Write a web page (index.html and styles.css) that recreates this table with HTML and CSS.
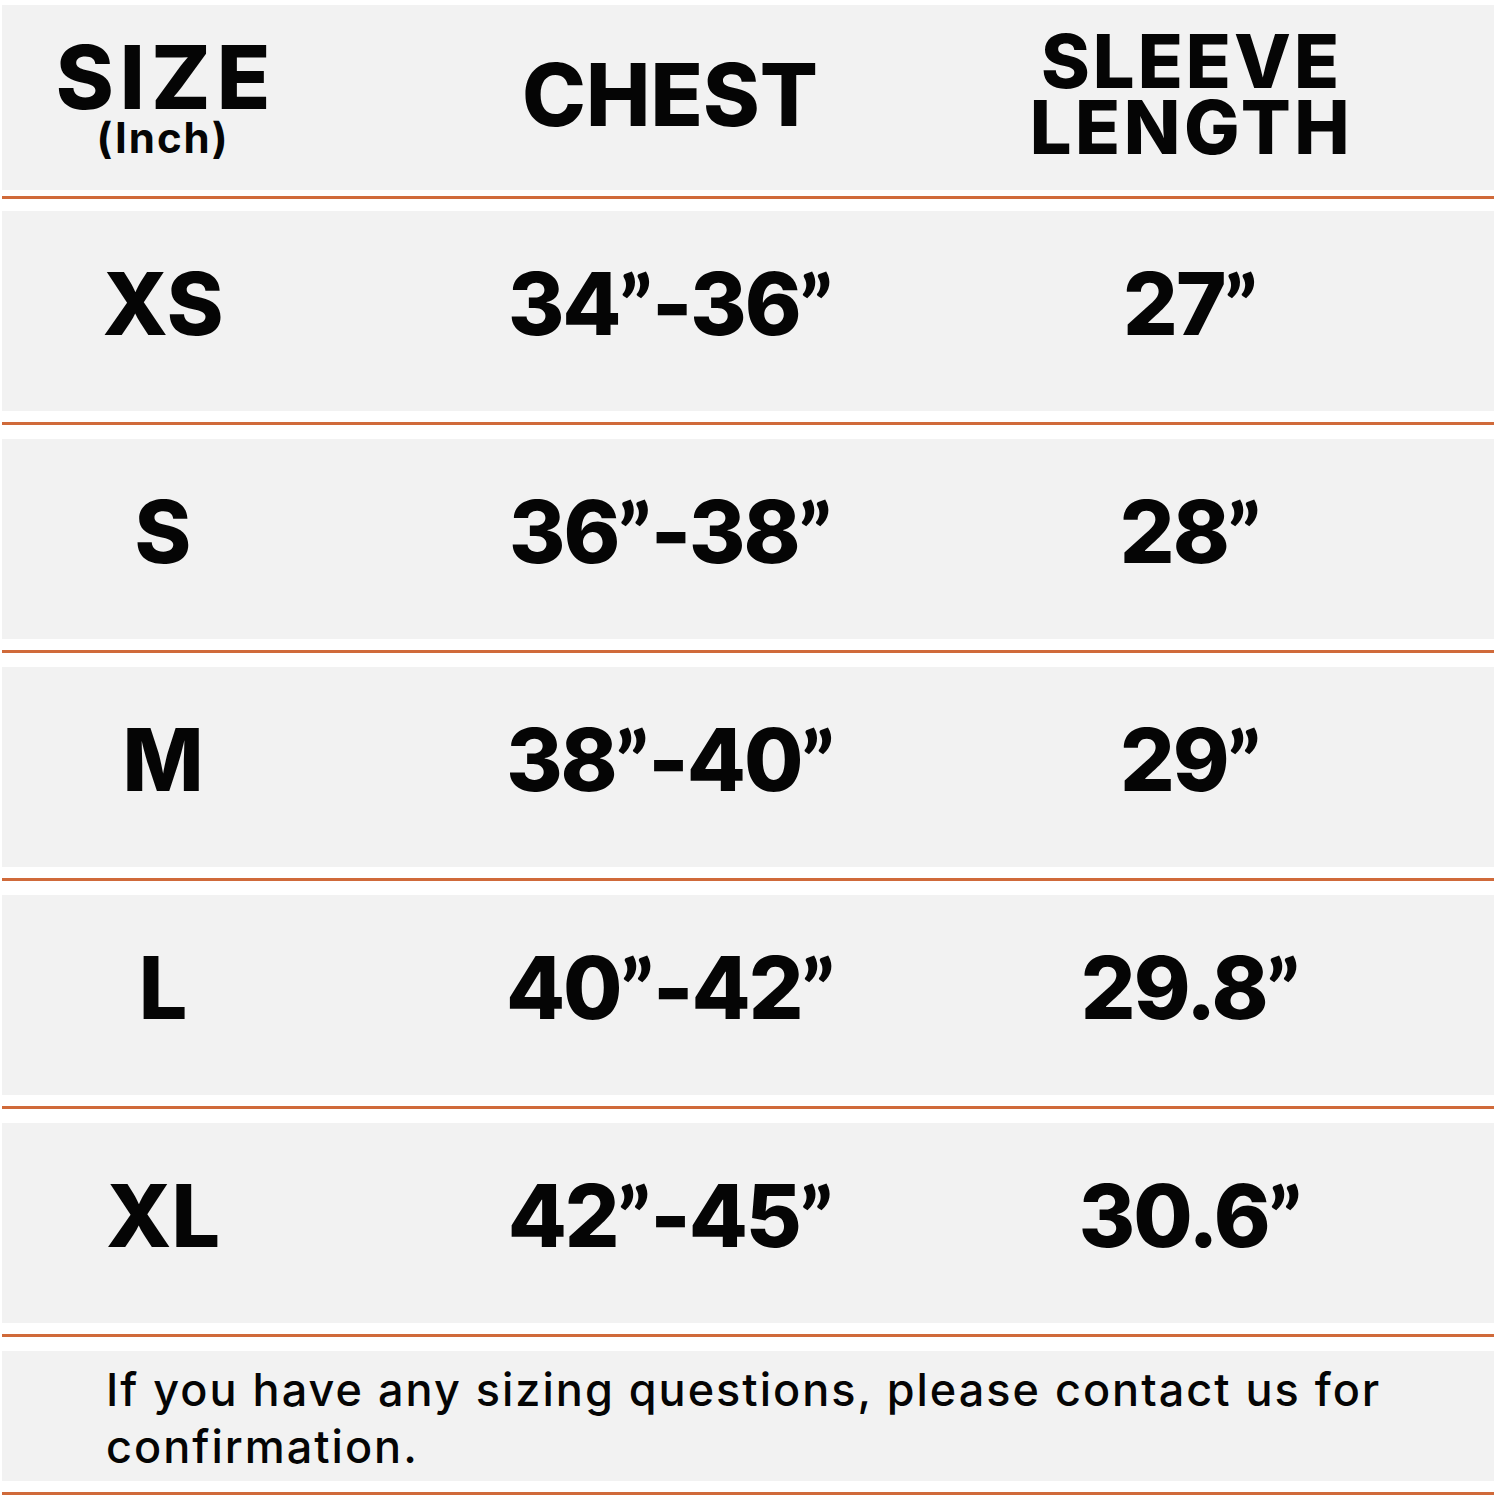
FILE: index.html
```html
<!DOCTYPE html>
<html lang="en">
<head>
<meta charset="utf-8">
<title>Size Chart</title>
<link rel="stylesheet" href="styles.css">
</head>
<body>
<main class="chart">
  <div class="row head">
    <div class="cell"><div class="size">SIZE</div><div class="unit">(Inch)</div></div>
    <div class="cell"><div class="h1">CHEST</div></div>
    <div class="cell"><div class="h2">SLEEVE</div><div class="h2">LENGTH</div></div>
  </div>
  <div class="sep first"></div>
  <div class="row"><div class="cell">XS</div><div class="cell num">34<span class="q">”</span>-36<span class="q">”</span></div><div class="cell num">27<span class="q">”</span></div></div>
  <div class="sep"></div>
  <div class="row"><div class="cell">S</div><div class="cell num">36<span class="q">”</span>-38<span class="q">”</span></div><div class="cell num">28<span class="q">”</span></div></div>
  <div class="sep"></div>
  <div class="row"><div class="cell">M</div><div class="cell num">38<span class="q">”</span>-40<span class="q">”</span></div><div class="cell num">29<span class="q">”</span></div></div>
  <div class="sep"></div>
  <div class="row"><div class="cell">L</div><div class="cell num">40<span class="q">”</span>-42<span class="q">”</span></div><div class="cell num">29.8<span class="q">”</span></div></div>
  <div class="sep"></div>
  <div class="row"><div class="cell">XL</div><div class="cell num">42<span class="q">”</span>-45<span class="q">”</span></div><div class="cell num">30.6<span class="q">”</span></div></div>
  <div class="sep"></div>
  <div class="note">If you have any sizing questions, please contact us for confirmation.</div>
  <div class="sep"></div>
</main>
</body>
</html>
```

FILE: styles.css
```css
html, body {
  margin: 0;
  padding: 0;
  background: #ffffff;
}

body {
  font-family: Inter, "Noto Sans", sans-serif;
  color: #050505;
}

.chart {
  width: 1492px;
  margin-left: 2px;
  padding-top: 5px;
}

.row {
  display: grid;
  grid-template-columns: 322px 692px 348px 1fr;
  height: 200px;
  background: #f2f2f2;
  align-items: center;
}

.row.head {
  height: 185px;
}

.cell {
  display: flex;
  flex-direction: column;
  align-items: center;
  justify-content: center;
  text-align: center;
  font-weight: 800;
  font-size: 86px;
  line-height: 1;
  padding-bottom: 14px;
}

.num {
  display: block;
  letter-spacing: -2px;
}

.q {
  font-family: Lato, "Noto Sans", sans-serif;
  font-weight: 900;
  font-size: 82px;
  letter-spacing: 0;
}

.head .cell {
  padding-bottom: 0;
}

.size {
  font-size: 88px;
  letter-spacing: 6px;
  margin-left: 6px;
  line-height: 0.9;
  margin-top: 2px;
}

.unit {
  font-size: 42px;
  font-weight: 700;
  letter-spacing: 2px;
  line-height: 1;
  margin-top: 0;
}

.h1 {
  font-size: 86px;
  line-height: 1;
  margin-bottom: 6px;
}

.h2 {
  font-size: 74px;
  line-height: 60px;
  letter-spacing: 3px;
  margin-left: 3px;
}

.h2 + .h2 {
  margin-top: 6px;
  letter-spacing: 3.5px;
}

.head .cell:last-child {
  margin-top: -8px;
}

.sep {
  height: 3px;
  background: #d06a3a;
  margin: 11px 0 14px;
}

.sep.first {
  margin-top: 6px;
  margin-bottom: 12px;
}

.note {
  background: #f2f2f2;
  height: 130px;
  box-sizing: border-box;
  padding: 10px 40px 0 104px;
  font-size: 45px;
  font-weight: 500;
  letter-spacing: 2px;
  line-height: 57px;
}
```
